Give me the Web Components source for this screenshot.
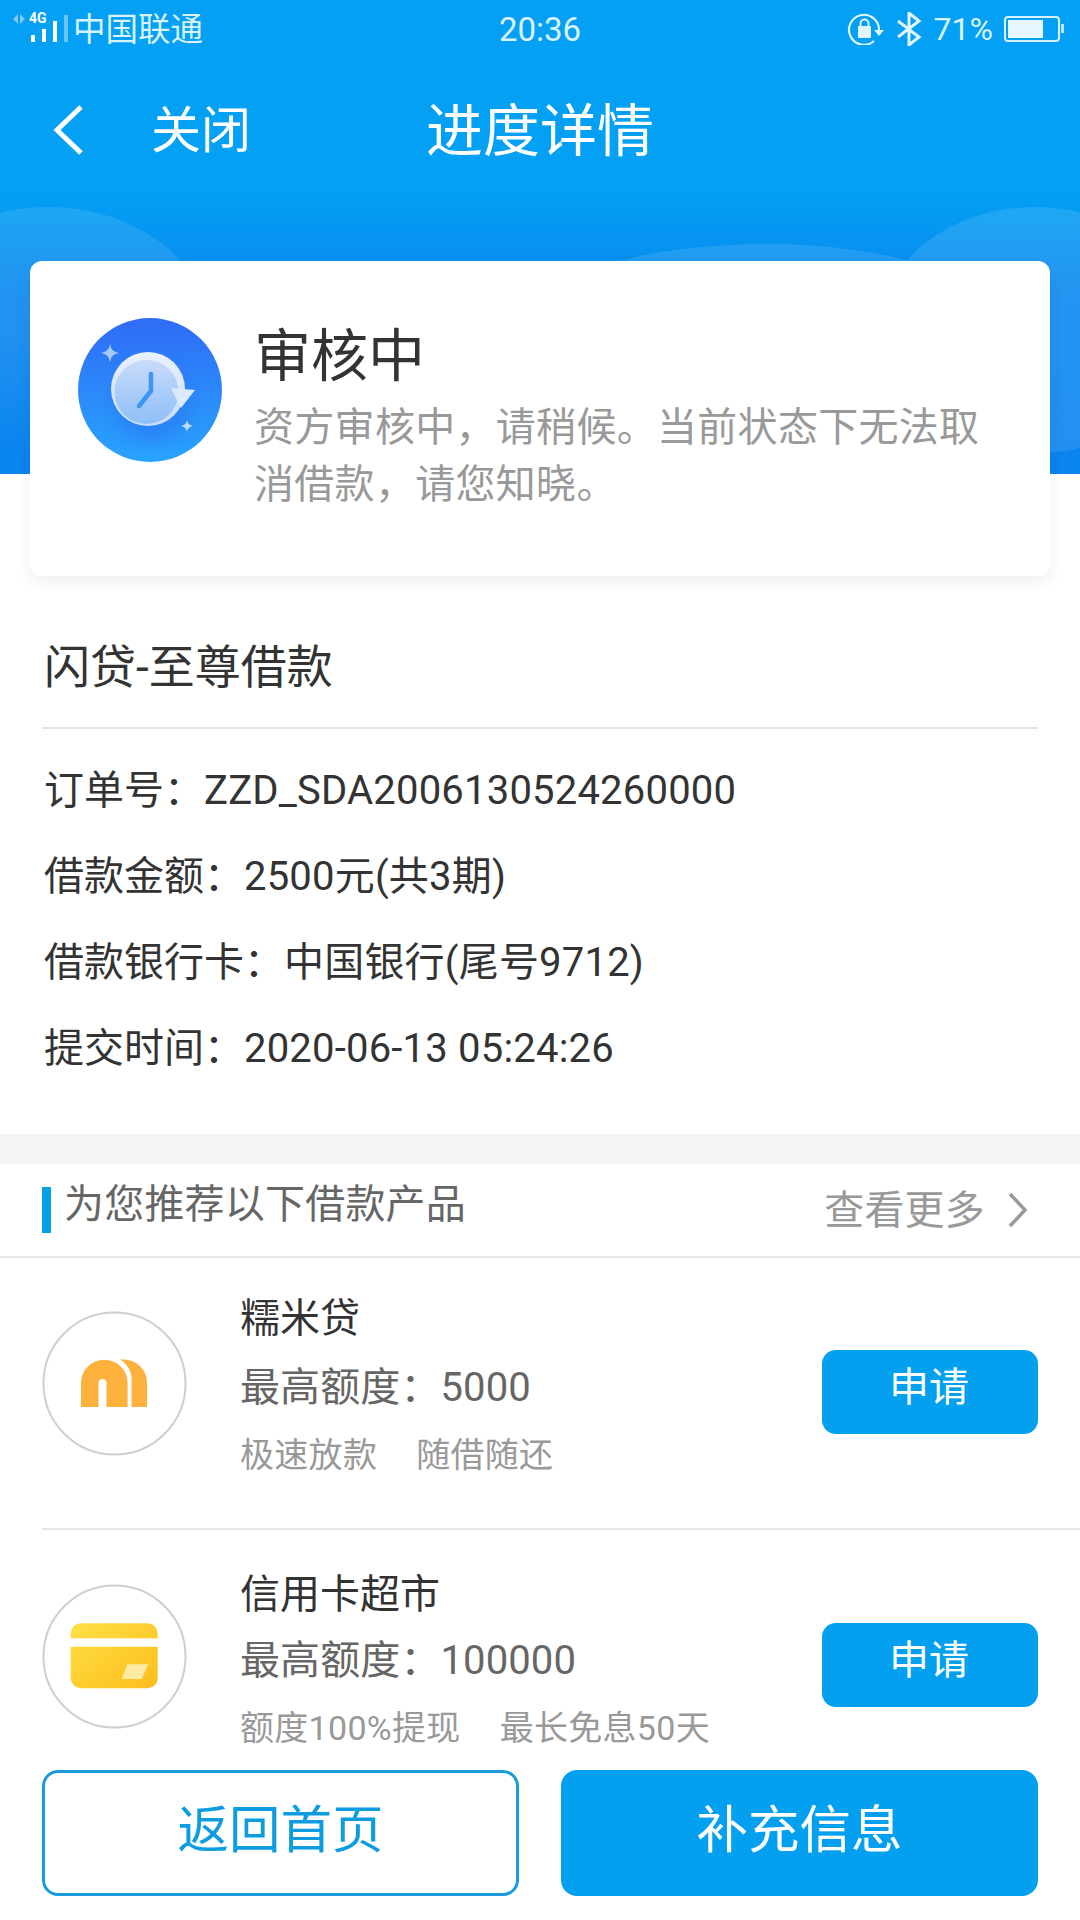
<!DOCTYPE html>
<html lang="zh">
<head>
<meta charset="utf-8">
<title>进度详情</title>
<style>
    html, body { margin: 0; padding: 0; background: #fff; }
    body { font-family: Roboto, "Noto Sans CJK SC", sans-serif; }
</style>
</head>
<body>
<app-page>
    <hero-panel>
        <status-bar></status-bar>
        <nav-bar close="关闭" title="进度详情"></nav-bar>
        <status-card heading="审核中">资方审核中，请稍候。当前状态下无法取消借款，请您知晓。</status-card>
    </hero-panel>
    <order-info heading="闪贷-至尊借款">
        <info-row label="订单号：" value="ZZD_SDA2006130524260000"></info-row>
        <info-row label="借款金额：" value="2500元(共3期)"></info-row>
        <info-row label="借款银行卡：" value="中国银行(尾号9712)"></info-row>
        <info-row label="提交时间：" value="2020-06-13 05:24:26"></info-row>
    </order-info>
    <section-head heading="为您推荐以下借款产品" more="查看更多"></section-head>
    <product-item name="糯米贷" quota="最高额度：5000" tag-a="极速放款" tag-b="随借随还" logo="rice" style="--top:53px;--text-top:31px;--gap-name:9px;--btn-top:92px"></product-item>
    <product-item rule name="信用卡超市" quota="最高额度：100000" tag-a="额度100%提现" tag-b="最长免息50天" logo="card" style="--top:54px;--text-top:35px;--gap-name:6px;--btn-top:93px"></product-item>
    <action-bar slot="foot" back="返回首页" next="补充信息"></action-bar>
</app-page>

<script>
const CN = 'Roboto, "Noto Sans CJK SC", sans-serif';

class AppPage extends HTMLElement {
    connectedCallback() {
        this.attachShadow({ mode: 'open' }).innerHTML = `
        <style>
          :host { display: flex; flex-direction: column; width: 1080px; height: 1920px; overflow: hidden; background: #fff; font-family: ${CN}; }
          .body { flex: 1; min-height: 0; overflow: hidden; }
        </style>
        <div class="body"><slot></slot></div>
        <slot name="foot"></slot>`;
    }
}

class HeroPanel extends HTMLElement {
    connectedCallback() {
        this.attachShadow({ mode: 'open' }).innerHTML = `
        <style>
          :host { display: block; position: relative; background: linear-gradient(180deg, #03a0f3 0, #03a0f3 190px, #0a86ef 300px, #0a84ef 474px) no-repeat; background-size: 100% 474px; }
          svg { position: absolute; left: 0; top: 200px; }
          .in { position: relative; }
        </style>
        <svg width="1080" height="274" viewBox="0 200 1080 274">
          <defs>
            <linearGradient id="fade" x1="0" y1="0" x2="0" y2="1">
              <stop offset="0" stop-color="#fff" stop-opacity=".1"/>
              <stop offset=".5" stop-color="#fff" stop-opacity=".1"/>
              <stop offset="1" stop-color="#fff" stop-opacity="0"/>
            </linearGradient>
            <linearGradient id="blob" x1="0" y1="0" x2="0" y2="1">
              <stop offset="0" stop-color="#fff" stop-opacity=".11"/>
              <stop offset="1" stop-color="#fff" stop-opacity=".1"/>
            </linearGradient>
          </defs>
          <ellipse cx="48" cy="330" rx="160" ry="123" fill="url(#fade)"/>
          <ellipse cx="1035" cy="330" rx="155" ry="123" fill="url(#blob)"/>
          <ellipse cx="765" cy="320" rx="230" ry="76" fill="url(#blob)"/>
        </svg>
        <div class="in"><slot></slot></div>`;
    }
}

class StatusBar extends HTMLElement {
    connectedCallback() {
        this.attachShadow({ mode: 'open' }).innerHTML = `
        <style>
          :host { display: grid; grid-template-columns: 1fr auto 1fr; align-items: center; height: 56px; color: #d9f2ff; font-size: 32.5px; line-height: 56px; }
          .left, .right { display: flex; align-items: center; }
          .left { padding-left: 12px; }
          .right { justify-content: flex-end; padding-right: 16px; }
          .sig { position: relative; width: 61px; height: 56px; }
          .sig svg { position: absolute; left: 0; top: 0; }
          .sig b { position: absolute; left: 17px; top: 10px; font: 700 14px/14px Roboto, sans-serif; color: #fff; }
          .name, .time { margin-top: 2px; }
          .pct { margin: 0 11px 0 12px; font-size: 32px; }
          .bt { margin-left: 12px; }
          .time { font-size: 33px; }
        </style>
        <div class="left">
          <div class="sig">
            <svg width="63" height="56" viewBox="12 0 63 56">
              <path d="M18 13v10l-5-5zM20 13v10l5-5z" fill="#7cc9f5"/>
              <g fill="#fff">
                <rect x="31" y="34" width="4" height="7"/>
                <rect x="42" y="28" width="4" height="13"/>
                <rect x="53" y="20" width="4" height="21"/>
              </g>
              <rect x="64" y="14" width="4" height="27" fill="#6cc4f6"/>
            </svg>
            <b>4G</b>
          </div>
          <span class="name">中国联通</span>
        </div>
        <span class="time">20:36</span>
        <div class="right">
          <svg width="38" height="32" viewBox="0 0 38 32">
            <path d="M28 28A15 15 0 1 1 33 17" fill="none" stroke="#e3f5ff" stroke-width="2.200"/>
            <path d="M28 17h10l-5 6z" fill="#e3f5ff"/>
            <rect x="12" y="13" width="13" height="12" rx="1" fill="#e3f5ff"/>
            <path d="M14.500 13V10.500a4 4 0 0 1 8 0V13" fill="none" stroke="#e3f5ff" stroke-width="2"/>
          </svg>
          <svg class="bt" width="26" height="34" viewBox="0 0 26 34">
            <path d="M2 9l21 16-10 8V1l10 8L2 25" fill="none" stroke="#e3f5ff" stroke-width="3"/>
          </svg>
          <span class="pct">71%</span>
          <svg width="60" height="26" viewBox="0 0 60 26">
            <rect x="1" y="1" width="54" height="24" rx="3" fill="none" stroke="#d9f2ff" stroke-width="2"/>
            <rect x="4" y="4" width="35" height="18" fill="#e6f6ff"/>
            <rect x="57" y="8" width="3" height="9" fill="#b9e4fb"/>
          </svg>
        </div>`;
    }
}

class NavBar extends HTMLElement {
    connectedCallback() {
        this.attachShadow({ mode: 'open' }).innerHTML = `
        <style>
          :host { display: grid; grid-template-columns: 1fr auto 1fr; align-items: center; height: 148px; color: #fff; }
          .back { display: flex; align-items: center; gap: 67px; padding-left: 53px; font-size: 50px; line-height: 60px; }
          .back span { margin-top: 2px; }
          .title { margin-top: 4px; font-size: 57px; line-height: 70px; }
          svg { display: block; }
        </style>
        <div class="back">
          <svg width="31" height="50" viewBox="0 0 31 50"><path d="M28 2L4 25l24 23" fill="none" stroke="#fff" stroke-width="5"/></svg>
          <span>${this.getAttribute('close')}</span>
        </div>
        <div class="title">${this.getAttribute('title')}</div>
        <div></div>`;
    }
}

class StatusCard extends HTMLElement {
    connectedCallback() {
        this.attachShadow({ mode: 'open' }).innerHTML = `
        <style>
          :host { display: flex; gap: 32px; box-sizing: border-box; height: 315px; margin: 57px 30px 0; padding: 57px 54px 0 48px; background: #fff; border-radius: 12px; box-shadow: 0 5px 16px rgba(0,0,0,.07); }
          svg { flex: none; display: block; }
          .txt { padding-top: 9px; }
          h2 { margin: 0 0 12px; font-size: 57px; line-height: 60px; font-weight: 400; color: #333; }
          p { margin: 0; font-size: 40px; line-height: 57px; letter-spacing: .3px; color: #999; }
        </style>
        <svg width="144" height="144" viewBox="0 0 144 144">
          <defs>
            <linearGradient id="bg" x1="0" y1="0" x2="0" y2="1">
              <stop offset="0" stop-color="#2f6cf6"/>
              <stop offset="1" stop-color="#28a4fd"/>
            </linearGradient>
            <linearGradient id="ring" x1="0" y1="0" x2="0" y2="1">
              <stop offset="0" stop-color="#e9f1fd"/>
              <stop offset="1" stop-color="#c9ddfb"/>
            </linearGradient>
            <linearGradient id="disc" x1="0" y1="0" x2="0" y2="1">
              <stop offset="0" stop-color="#c8dbfa"/>
              <stop offset="1" stop-color="#8fbff9"/>
            </linearGradient>
            <filter id="soft"><feGaussianBlur stdDeviation="9"/></filter>
          </defs>
          <circle cx="72" cy="72" r="72" fill="url(#bg)"/>
          <circle cx="74" cy="84" r="40" fill="#2c7cf3" opacity=".7" filter="url(#soft)"/>
          <circle cx="70" cy="71" r="37" fill="url(#ring)"/>
          <circle cx="68.500" cy="74" r="32" fill="url(#disc)"/>
          <path d="M93 70l24 2-14 18z" fill="#dde9fc"/>
          <path d="M73 56v17L61 88" fill="none" stroke="#3d96f4" stroke-width="4.500" stroke-linecap="round" stroke-linejoin="round"/>
          <path d="M32 26q1 8 9 9-8 1-9 9-1-8-9-9 8-1 9-9z" fill="#a9c8fb"/>
          <path d="M109 102q.600 5 6 6-5.400 1-6 6-.600-5-6-6 5.400-1 6-6z" fill="#bcdcfd"/>
        </svg>
        <div class="txt">
          <h2>${this.getAttribute('heading')}</h2>
          <p><slot></slot></p>
        </div>`;
    }
}

class OrderInfo extends HTMLElement {
    connectedCallback() {
        this.attachShadow({ mode: 'open' }).innerHTML = `
        <style>
          :host { display: block; padding: 61px 42px 55px; border-bottom: 30px solid #f4f4f4; color: #333; }
          h3 { margin: 0 0 32px; padding: 0 0 30px 2px; border-bottom: 2px solid #e4e4e4; font-size: 46px; line-height: 60px; font-weight: 400; }
          .rows { display: flex; flex-direction: column; gap: 26px; padding-left: 2px; }
        </style>
        <h3>${this.getAttribute('heading')}</h3>
        <div class="rows"><slot></slot></div>`;
    }
}

class InfoRow extends HTMLElement {
    connectedCallback() {
        this.attachShadow({ mode: 'open' }).innerHTML = `
        <style>
          :host { display: block; font-size: 40px; line-height: 60px; color: #333; white-space: nowrap; }
          .val { letter-spacing: .2px; }
        </style>
        <span>${this.getAttribute('label')}</span><span class="val">${this.getAttribute('value')}</span>`;
    }
}

class SectionHead extends HTMLElement {
    connectedCallback() {
        this.attachShadow({ mode: 'open' }).innerHTML = `
        <style>
          :host { display: flex; align-items: center; height: 92px; padding: 0 52px 0 42px; border-bottom: 2px solid #e6e6e6; }
          .bar { flex: none; width: 9px; height: 46px; background: #03a0e6; }
          h3 { flex: 1; margin: -10px 0 0 13px; font-size: 40px; line-height: 60px; letter-spacing: .2px; font-weight: 400; color: #666; }
          .more { display: flex; align-items: center; gap: 23px; font-size: 40px; line-height: 60px; letter-spacing: .2px; color: #999; }
          .more span { margin-top: 2px; }
          svg { display: block; }
        </style>
        <div class="bar"></div>
        <h3>${this.getAttribute('heading')}</h3>
        <div class="more">
          <span>${this.getAttribute('more')}</span>
          <svg width="20" height="36" viewBox="0 0 20 36"><path d="M2 2l15 16L2 34" fill="none" stroke="#999" stroke-width="3.500"/></svg>
        </div>`;
    }
}

const LOGOS = {
    rice: `<path d="M38 95V71a23.300 23.300 0 0 1 46.600 0V95H63.500V71a4 4 0 0 0-8 0V95Z" fill="#fdb23e"/>
           <path d="M77 47.500h4a23 23 0 0 1 23 23V95H88.500V71a24 24 0 0 0-11.500-23.500Z" fill="#fdb23e"/>`,
    card: `<defs><linearGradient id="gold" x1="0" y1="0" x2="1" y2="1">
             <stop offset="0" stop-color="#fee045"/><stop offset="1" stop-color="#fdbd1c"/>
           </linearGradient></defs>
           <path d="M38 38.300h66.700a10 10 0 0 1 10 10v5H27.700v-5a10 10 0 0 1 10-10zM27.700 61.700h87v31.600a10 10 0 0 1-10 10H37.700a10 10 0 0 1-10-10z" fill="url(#gold)"/>
           <path d="M84.300 79.300h21L98.700 94h-20z" fill="#fdeaa3"/>`
};

class ProductItem extends HTMLElement {
    connectedCallback() {
        const rule = this.hasAttribute('rule') ? '<div class="rule"></div>' : '';
        this.attachShadow({ mode: 'open' }).innerHTML = `
        <style>
          :host { display: block; padding-left: 42px; }
          .rule { height: 2px; background: #e6e6e6; }
          .wrap { display: flex; align-items: flex-start; height: 270px; padding-right: 42px; }
          .logo { flex: none; width: 145px; height: 145px; margin: var(--top) 53px 0 0; }
          .logo svg { display: block; }
          .txt { flex: 1; margin-top: var(--text-top); }
          .name { font-size: 40px; line-height: 60px; color: #333; }
          .quota { margin-top: var(--gap-name); font-size: 40px; line-height: 60px; letter-spacing: .1px; color: #666; }
          .tags { display: flex; gap: 39px; margin-top: 7px; font-size: 34px; line-height: 60px; letter-spacing: .3px; color: #999; white-space: nowrap; }
          button { flex: none; width: 216px; height: 84px; margin-top: var(--btn-top); padding: 0 2px 8px 0; border: 0; border-radius: 14px; background: #03a0ef; color: #fff; font: 40px/60px ${CN}; }
        </style>
        ${rule}
        <div class="wrap">
          <div class="logo"><svg width="145" height="145" viewBox="-1 -1 145 145">
            <circle cx="71.500" cy="71.500" r="71" fill="#fff" stroke="#cfcfcf" stroke-width="2"/>
            ${LOGOS[this.getAttribute('logo')]}
          </svg></div>
          <div class="txt">
            <div class="name">${this.getAttribute('name')}</div>
            <div class="quota">${this.getAttribute('quota')}</div>
            <div class="tags"><span>${this.getAttribute('tag-a')}</span><span>${this.getAttribute('tag-b')}</span></div>
          </div>
          <button>申请</button>
        </div>`;
    }
}

class ActionBar extends HTMLElement {
    connectedCallback() {
        this.attachShadow({ mode: 'open' }).innerHTML = `
        <style>
          :host { display: grid; grid-template-columns: 1fr 1fr; gap: 42px; flex: none; box-sizing: border-box; height: 172px; padding: 22px 42px 24px; background: #fff; }
          button { box-sizing: border-box; border-radius: 16px; font: 51.500px/60px ${CN}; padding: 0 0 4px; }
          .ghost { background: #fff; border: 3px solid #1a9bdb; color: #0d9ce0; }
          .solid { background: #03a0ef; border: 0; color: #fff; }
        </style>
        <button class="ghost">${this.getAttribute('back')}</button>
        <button class="solid">${this.getAttribute('next')}</button>`;
    }
}

customElements.define('app-page', AppPage);
customElements.define('hero-panel', HeroPanel);
customElements.define('status-bar', StatusBar);
customElements.define('nav-bar', NavBar);
customElements.define('status-card', StatusCard);
customElements.define('order-info', OrderInfo);
customElements.define('info-row', InfoRow);
customElements.define('section-head', SectionHead);
customElements.define('product-item', ProductItem);
customElements.define('action-bar', ActionBar);
</script>
</body>
</html>
